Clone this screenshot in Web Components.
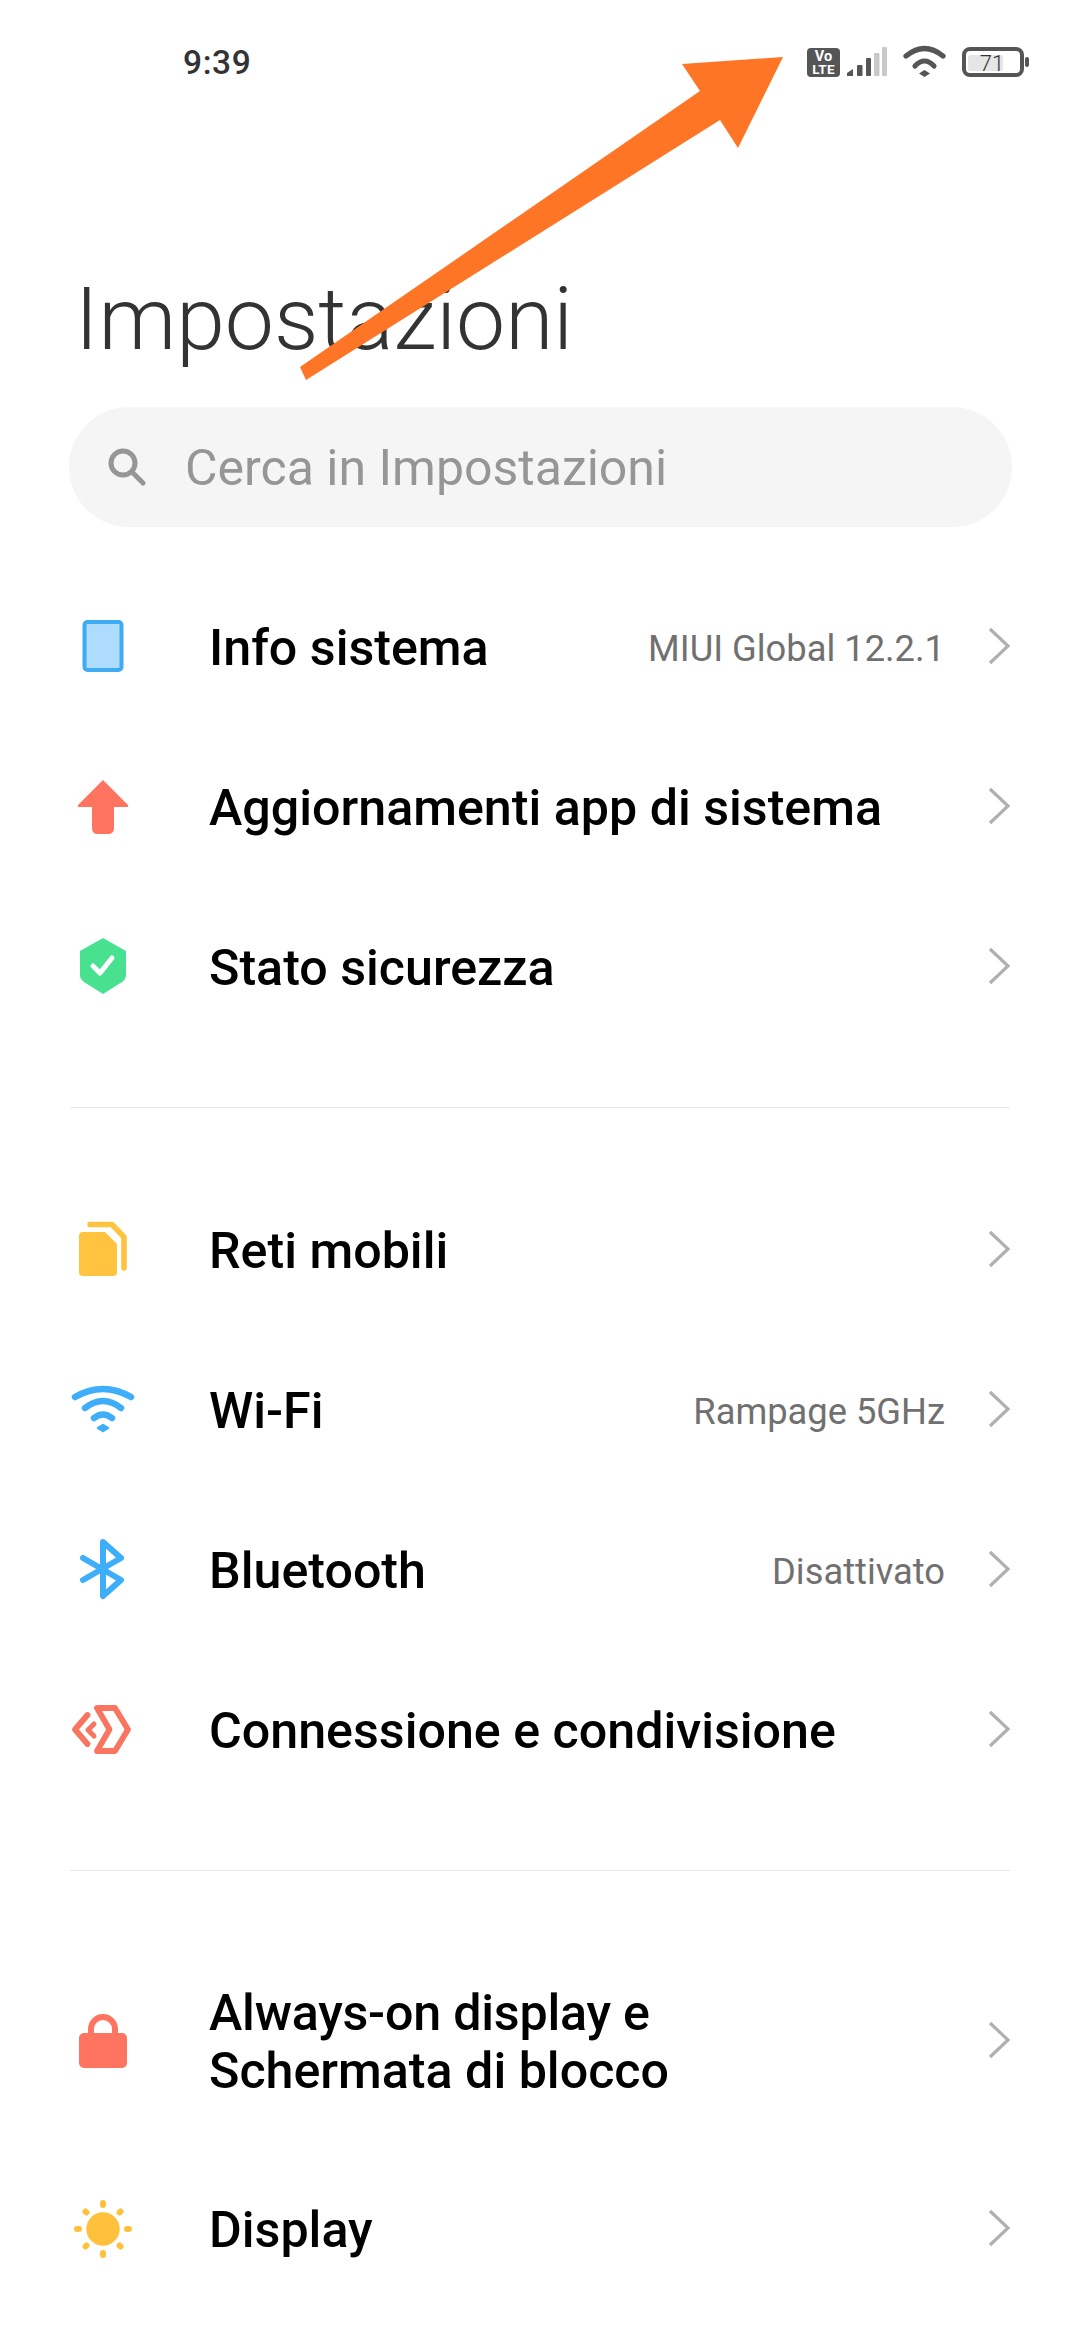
<!DOCTYPE html>
<html><head><meta charset="utf-8"><style>
html,body{margin:0;padding:0;background:#fff;font-family:Roboto,sans-serif}
body{width:1080px;height:2340px;overflow:hidden;position:relative;display:flex;flex-direction:column}
svg{overflow:visible}
.tight{letter-spacing:-.22px}
</style></head><body>
<status-bar></status-bar>
<page-title>Impostazioni</page-title>
<search-box>Cerca in Impostazioni</search-box>
<settings-group>
<setting-row value="MIUI Global 12.2.1"><svg slot="icon" width="60" height="60" viewBox="0 0 60 60"><rect x="11.500" y="5" width="37" height="48" rx="3" fill="#addcff" stroke="#3fabf3" stroke-width="4"/></svg>Info sistema</setting-row>
<setting-row><svg slot="icon" width="60" height="60" viewBox="0 0 60 60"><path d="M30 3 L55 28 Q56 30 53 30 H41 V51 Q41 57 35 57 H25 Q19 57 19 51 V30 H7 Q4 30 5 28Z" fill="#fe7460"/></svg>Aggiornamenti app di sistema</setting-row>
<setting-row><svg slot="icon" width="60" height="60" viewBox="0 0 60 60"><path d="M30 1 L53 14 V38 Q53 42 49 45 L30 57 L11 45 Q7 42 7 38 V14Z" fill="#48e18f"/><path d="M20 29 L27 36 L39 21" fill="none" stroke="#fff" stroke-width="5" stroke-linecap="round" stroke-linejoin="round"/></svg>Stato sicurezza</setting-row>
</settings-group>
<group-divider></group-divider>
<settings-group>
<setting-row><svg slot="icon" width="60" height="60" viewBox="0 0 60 60"><path d="M10 12 Q6 12 6 16 V52 Q6 56 10 56 H40 Q44 56 44 52 V24 L32 12Z" fill="#ffc340"/><path d="M17 4.500 H39 L51 17 V48" fill="none" stroke="#ffc340" stroke-width="5.500" stroke-linecap="round" stroke-linejoin="round"/></svg>Reti mobili</setting-row>
<setting-row value="Rampage 5GHz"><svg slot="icon" width="64" height="60" viewBox="0 0 64 60" style="margin-left:-2px;margin-right:-2px"><g fill="none" stroke="#3eaefb" stroke-width="6.500" stroke-linecap="round"><path d="M4 17 Q32 1 60 17"/><path d="M14 28 Q32 14 50 28"/><path d="M23 38 Q32 31 41 38"/></g><path d="M32 45 L37 48 L32 51 L27 48Z" fill="#3eaefb" stroke="#3eaefb" stroke-width="2.500" stroke-linejoin="round"/></svg>Wi-Fi</setting-row>
<setting-row value="Disattivato"><svg slot="icon" width="60" height="60" viewBox="0 0 60 60"><path d="M10 18 L48 40 L30 56 V2 L48 18 L10 40" fill="none" stroke="#3eaefb" stroke-width="6" stroke-linecap="round" stroke-linejoin="round"/></svg>Bluetooth</setting-row>
<setting-row><svg slot="icon" width="60" height="60" viewBox="0 0 60 60"><path d="M24 8 H42 L55 29.500 L42 51 H24 L36.500 29.500Z" fill="none" stroke="#f97560" stroke-width="5.800" stroke-linejoin="round"/><path d="M14.500 15 L2 29.500 L14.500 44" fill="none" stroke="#f97560" stroke-width="5.800" stroke-linejoin="round" stroke-linecap="round"/><path d="M21 24 L15 30 L21 36" fill="none" stroke="#f97560" stroke-width="5" stroke-linejoin="round" stroke-linecap="round"/></svg>Connessione e condivisione</setting-row>
</settings-group>
<group-divider></group-divider>
<settings-group>
<setting-row tall><svg slot="icon" width="60" height="60" viewBox="0 0 60 60"><path d="M18 24 V18 A12 12 0 0 1 42 18 V24" fill="none" stroke="#fe7460" stroke-width="6"/><rect x="6" y="22" width="48" height="35" rx="5" fill="#fe7460"/></svg><span class="tight">Always-on display e</span><br>Schermata di blocco</setting-row>
<setting-row><svg slot="icon" width="60" height="60" viewBox="0 0 60 60"><circle cx="30" cy="30" r="16.700" fill="#ffc03c"/><g stroke="#ffc03c" stroke-width="6" stroke-linecap="round"><path d="M30 4V6M30 54V56M4 30H6M54 30H56M12.500 12.500L13.500 13.500M47.500 12.500L46.500 13.500M12.500 47.500L13.500 46.500M47.500 47.500L46.500 46.500"/></g></svg>Display</setting-row>
</settings-group>
<orange-arrow></orange-arrow>
<script>
function def(name,html){customElements.define(name,class extends HTMLElement{constructor(){super();this.attachShadow({mode:'open'}).innerHTML=html}})}
def('status-bar',`<style>:host{display:flex;flex:none;align-items:flex-start;justify-content:space-between;height:125px;padding:44px 51px 0 183px;box-sizing:border-box}
.t{font:500 33.500px/38px Roboto,sans-serif;color:#333;letter-spacing:.6px}
svg{display:block;margin-top:3px;overflow:visible}</style>
<span class="t">9:39</span>
<svg width="222" height="30" viewBox="807 47 222 30">
<rect x="807" y="48" width="33" height="29" rx="4" fill="#555"/>
<text x="823.500" y="60.500" text-anchor="middle" font-family="Roboto" font-weight="700" font-size="14.500" fill="#fff">Vo</text>
<text x="823.500" y="74" text-anchor="middle" font-family="Roboto" font-weight="700" font-size="13.500" letter-spacing=".3" fill="#fff">LTE</text>
<path d="M847 76 V73 L853 69 V76Z" fill="#555"/><rect x="857" y="65" width="5.500" height="11" rx="1" fill="#555"/><rect x="866" y="58" width="5" height="18" rx="1" fill="#555"/><rect x="874" y="53" width="5.500" height="23" rx="1" fill="#c9c9c9"/><rect x="882" y="47" width="5" height="29" rx="1" fill="#c9c9c9"/>
<g fill="none" stroke="#555" stroke-width="5.200" stroke-linecap="round"><path d="M906 56 Q924.500 41 943 56"/><path d="M915 66 Q924.500 56 934 66"/></g><path d="M924.500 70 L930 73.500 L924.500 77 L919 73.500Z" fill="#555"/>
<rect x="964" y="49" width="58" height="26" rx="6" fill="none" stroke="#555" stroke-width="4"/>
<rect x="968" y="55" width="35" height="16" rx="2" fill="#e6e6e6"/>
<text x="992" y="71" text-anchor="middle" font-family="Roboto" font-weight="300" font-size="22" fill="#333">71</text>
<rect x="1025" y="57" width="4" height="10" rx="2" fill="#555"/>
</svg>`);
def('page-title',`<style>:host{display:block;flex:none;margin:141px 0 0 75px;font:300 87.700px/106px Roboto,sans-serif;color:#333}</style><slot></slot>`);
def('search-box',`<style>:host{display:flex;flex:none;align-items:center;margin:35px 0 40px 69px;width:943px;height:120px;border-radius:60px;background:#f5f5f5;font:400 50px Roboto,sans-serif;color:#969696;box-sizing:border-box;padding-left:37px;gap:39px}svg{flex:none}span{position:relative;top:1px;display:block}</style>
<svg width="40" height="40" viewBox="0 0 40 40"><circle cx="17" cy="16" r="12" fill="none" stroke="#969696" stroke-width="5"/><path d="M26 25L37 36" stroke="#969696" stroke-width="5" stroke-linecap="round"/></svg><div style="padding-top:2px"><slot></slot></div>`);
def('settings-group',`<style>:host{display:block;flex:none}</style><slot></slot>`);
def('group-divider',`<style>:host{display:block;flex:none;height:1px;margin:60px 70px 62px;background:#e8e8e8}</style>`);
customElements.define('setting-row',class extends HTMLElement{constructor(){super();const v=this.getAttribute('value');this.attachShadow({mode:'open'}).innerHTML=`<style>:host{display:flex;align-items:center;height:160px;padding:0 70px 0 73px;font:500 50.200px/58px Roboto,sans-serif;color:#000}
:host([tall]){height:216px}
.i{width:60px;height:60px;flex:none;margin-right:76px;display:flex;justify-content:center}
svg{overflow:visible}
.l{flex:1;padding-top:2px}.v{font:400 36.300px Roboto,sans-serif;color:#707070;margin-right:43px;padding-top:2px}svg.c{flex:none;margin-bottom:2px}</style>
<div class="i"><slot name="icon"></slot></div><div class="l"><slot></slot></div>${v?`<div class="v">${v}</div>`:''}<svg class="c" width="22" height="38" viewBox="0 0 22 38"><path d="M2 2L20 19L2 36" fill="none" stroke="#b0b0b0" stroke-width="3.200"/></svg>`}});
def('orange-arrow',`<style>:host{display:block;position:absolute;left:0;top:0;pointer-events:none}svg{display:block}</style><svg width="1080" height="400"><path d="M783 57 L682 64 L700 91 L300 367 L306 380 L720 120 L738 148Z" fill="#ff7526"/></svg>`);
</script>
</body></html>
